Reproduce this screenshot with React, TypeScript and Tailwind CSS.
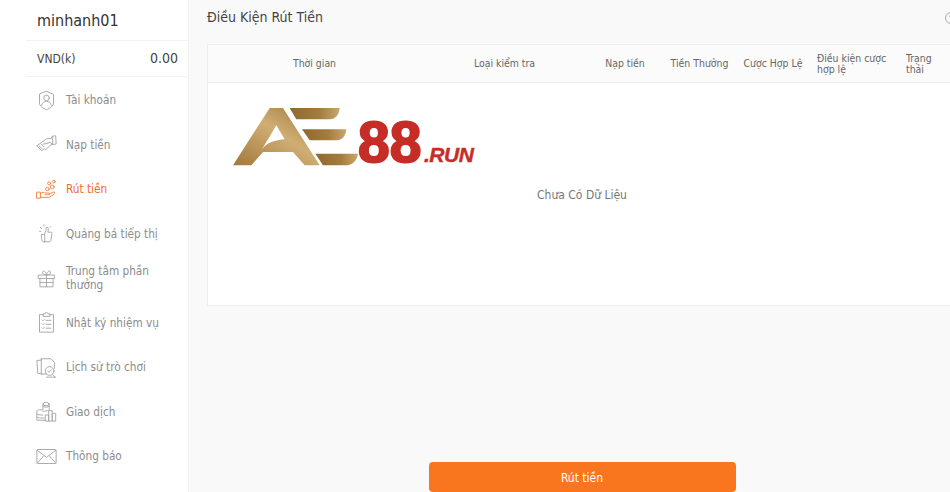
import React from "react";

const S = ({ children, c = "#a8a8a8" }: { children: React.ReactNode; c?: string }) => (
  <svg width="21" height="21" viewBox="0 0 24 24" fill="none" stroke={c} strokeWidth="1.100" strokeLinecap="round" strokeLinejoin="round">
    {children}
  </svg>
);

const icons: Record<string, (c?: string) => React.ReactNode> = {
  account: (c) => (
    <S c={c}>
      <path d="M12 1.500 20 5v10c0 3-4 6-8 7.500C8 21 4 18 4 15V5z" />
      <circle cx="12" cy="9" r="3.200" />
      <path d="M6.500 17.500c.5-3 3-4.500 5.500-4.500s5 1.500 5.500 4.500" />
    </S>
  ),
  deposit: (c) => (
    <S c={c}>
      <path d="M1 13.500 12 5.500l5.500-.5 1-2.500 4-.5.500 9.500-5 .5" />
      <path d="M1 13.500l5.500 5.500 3-2 1.500 1 7-6.500-1.500-2-5 1.500-3 .5" />
      <path d="M3.500 13.500l3 3M6 11.500l3 3M19 3v8" />
    </S>
  ),
  withdraw: (c) => (
    <S c={c}>
      <path d="M1 15h4v7H1zM5 16.500c2.500-1.500 4.500-1.500 6-.5h3.500c1.500 0 1.500 2-.5 2h-3.500M14.500 17.500l5-2.500c2-.5 2.500 1 1.500 2l-6 4H5" />
      <circle cx="13" cy="11.500" r="2" />
      <circle cx="18.500" cy="9" r="2.200" />
      <circle cx="15" cy="5" r="1.800" />
      <circle cx="20.500" cy="3" r="1.500" />
    </S>
  ),
  promo: (c) => (
    <S c={c}>
      <path d="M6.500 13h3l2-4.500V5c2-.5 3 1 2.500 3l-.5 2.500h3.500c1.500 0 1.500 1.500 1 2.500l-1 7c-.2 1-1 1.500-2 1.500H9c-1.500 0-2.500-1-2.500-2.500z" />
      <path d="M10 13v9M5 5l1.500 1.500M4 9.500h1.500M9 2v1.500M17 4l-1 1" />
    </S>
  ),
  gift: (c) => (
    <S c={c}>
      <path d="M3 8h18v4H3zM4.500 12v9.500h15V12M12 8v13.500M4.500 16.500h15" />
      <path d="M12 8C9 8 7 6.500 7.500 4.500S11 3 12 8c1-5 4-5.500 4.500-3.500S15 8 12 8z" />
    </S>
  ),
  task: (c) => (
    <S c={c}>
      <path d="M8 3H4v20h16V3h-4" />
      <path d="M8 4.500V2h2.500a1.500 1.500 0 0 1 3 0H16v2.500z" />
      <path d="M7 9l1 1 1.500-1.500M7 13.500l1 1 1.500-1.500M7 18l1 1 1.500-1.500M11.500 9.500H17M11.500 14H17M11.500 18.500H17" />
    </S>
  ),
  history: (c) => (
    <S c={c}>
      <path d="M7 19.500 2 18.500 1 4l5-.5" />
      <path d="M6 2h11l4 4v7M6 2v17.500h6" />
      <circle cx="15.500" cy="16" r="5" />
      <path d="m13.500 16 1.500 1.500 2.500-3M19 20l3 3M12 23h10" />
    </S>
  ),
  money: (c) => (
    <S c={c}>
      <ellipse cx="11.500" cy="3.500" rx="3.500" ry="2" />
      <path d="M8 3.500V9M15 3.500V11M8 6c1 1.500 6 1.500 7 0M8 10H4C2 10 1 11 1 12v10h10M1 15c1 1 4 1 7 1M1 18.500c1 1 4 1 8 1M13 11c-2 0-4 1-5 1" />
      <path d="M11 16h3.500v7H11zM15 11h3.500v12H15zM19 14h3.500v9H19z" />
    </S>
  ),
  mail: (c) => (
    <S c={c}>
      <rect x="1" y="4" width="22" height="16" rx="1" />
      <path d="m1.500 5 10.500 8 10.500-8M1.500 19.500 9 11M22.500 19.500 15 11" />
    </S>
  ),
};

const menu = [
  ["account", "Tài khoản"],
  ["deposit", "Nạp tiền"],
  ["withdraw", "Rút tiền"],
  ["promo", "Quảng bá tiếp thị"],
  ["gift", "Trung tâm phần thưởng"],
  ["task", "Nhật ký nhiệm vụ"],
  ["history", "Lịch sử trò chơi"],
  ["money", "Giao dịch"],
  ["mail", "Thông báo"],
];

const font = "font-['DejaVu_Sans_Condensed','Noto_Sans',sans-serif]";

export default function App() {
  return (
    <div className={`flex h-[492px] w-[950px] overflow-hidden bg-white ${font}`}>
      <aside className="ml-[26px] flex w-[162px] shrink-0 flex-col">
        <div className="flex h-[41px] items-center border-b border-[#f2f2f2] pt-[2px] pl-[11px] text-[16px] text-[#333]">minhanh01</div>
        <div className="flex h-[36px] items-center justify-between border-b border-[#f2f2f2] pl-[11px] pr-[10px] text-[#444]">
          <span className="text-[12px]">VND(k)</span>
          <span className="text-[14px]">0.00</span>
        </div>
        <nav className="flex flex-col pt-[1px]">
          {menu.map(([k, t]) => {
            const active = k === "withdraw";
            return (
              <div key={k} className={`flex h-[44.5px] items-center gap-[9px] pl-[10px] text-[11.7px] leading-[14px] ${active ? "text-[#ee6c1e]" : "text-[#8c8c8c]"}`}>
                <span className="shrink-0">{icons[k](active ? "#f0874a" : "#a8a8a8")}</span>
                <span className="w-[100px]">{t}</span>
              </div>
            );
          })}
        </nav>
      </aside>
      <main className="relative flex h-[492px] w-[787px] shrink-0 flex-col border-l border-[#f0f0f0] bg-[#f9f9f9] px-[18px]">
        <div className="flex h-[44px] items-start justify-between pt-[7px]">
          <h1 className="text-[14px] leading-[20px] font-normal text-[#444]">Điều Kiện Rút Tiền</h1>
          <svg width="12" height="14" viewBox="0 0 12 14" fill="none" stroke="#aaa" className="mt-[4px]">
            <circle cx="6" cy="7" r="5.500" />
            <path d="M4.500 5.500a1.500 1.500 0 1 1 2.200 1.300c-.5.3-.7.6-.7 1.200M6 9.500v.5" />
          </svg>
        </div>
        <div className="relative h-[262px] border border-[#eeeeee] bg-white">
          <div className="grid h-[38px] grid-cols-[213px_167px_74px_75px_72px_89px_1fr] items-center border-b border-[#eeeeee] bg-[#fbfbfb] text-[10.4px] leading-[11px] text-[#666]">
            <div className="text-center">Thời gian</div>
            <div className="text-center">Loại kiểm tra</div>
            <div className="text-center">Nạp tiền</div>
            <div className="text-center">Tiền Thưởng</div>
            <div className="text-center">Cược Hợp Lệ</div>
            <div className="pl-[8px]">Điều kiện cược hợp lệ</div>
            <div className="w-[44px] pl-[8px]">Trạng thải</div>
          </div>
          <div className="pt-[104px] text-center text-[12px] leading-[16px] text-[#777]">Chưa Có Dữ Liệu</div>
          <div className="absolute left-[-8px] top-[45px] h-[90px] w-[300px]">
            <svg width="300" height="90" viewBox="0 0 900 270" className="absolute left-0 top-0">
              <defs>
                <linearGradient id="g" x1="0" y1="1" x2="1" y2="0">
                  <stop offset="0" stopColor="#a2773a" />
                  <stop offset="0.55" stopColor="#cfae74" />
                  <stop offset="1" stopColor="#9c7236" />
                </linearGradient>
                <linearGradient id="e" x1="0" y1="0" x2="1" y2="0">
                  <stop offset="0" stopColor="#8f682f" />
                  <stop offset="0.6" stopColor="#a57c3e" />
                  <stop offset="1" stopColor="#c9a86e" />
                </linearGradient>
              </defs>
              <path fillRule="evenodd" fill="url(#g)" d="M99 226 209 54H249L359 226H314L279 186H189L154 226ZM229 106 186 178C200 158 225 150 254 148Z" />
              <path fill="url(#e)" d="M269 54H419C418 72 408 88 388 88H289Z" />
              <path fill="url(#e)" d="M306 118H439C438 135 428 151 410 151H329Z" />
              <path fill="url(#e)" d="M346 191H474C472 210 458 226 436 226H369Z" />
            </svg>
            <span className="absolute left-[158px] top-[20px] font-['Liberation_Sans',sans-serif] text-[57px] leading-[65px] font-bold text-[#c62d26] [-webkit-text-stroke:2px_#c62d26]">88</span>
            <span className="absolute left-[224px] top-[53px] font-['Liberation_Sans',sans-serif] text-[21px] leading-[24px] font-bold italic tracking-[-0.5px] text-[#c62d26] [-webkit-text-stroke:0.4px_#c62d26]">.RUN</span>
          </div>
        </div>
        <button className="mx-auto mt-auto h-[30px] w-[307px] rounded-[4px] bg-[#f9751e] pt-[1px] text-[12px] text-white">Rút tiền</button>
      </main>
    </div>
  );
}
